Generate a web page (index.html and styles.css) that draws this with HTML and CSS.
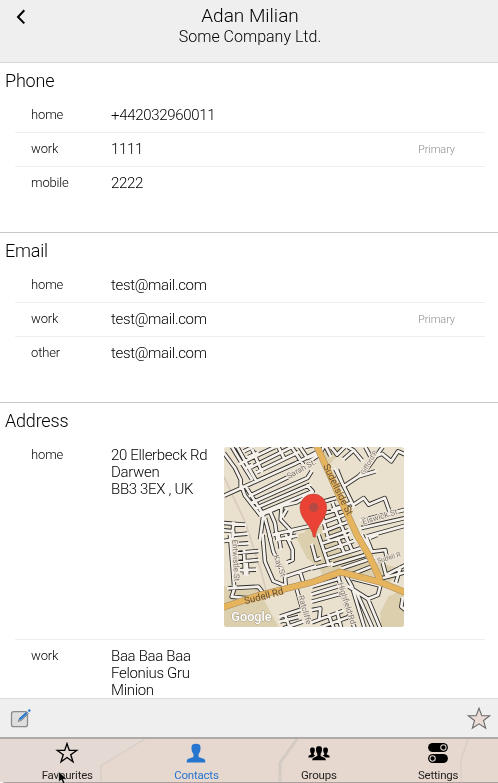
FILE: index.html
```
<!DOCTYPE html>
<html lang="en">
<head>
<meta charset="utf-8">
<title>Adan Milian</title>
<link rel="stylesheet" href="styles.css">
</head>
<body>
<div class="app">
  <header class="header">
    <svg class="back" viewBox="0 0 10 16"><path d="M8.3 1.2 L2 8 L8.3 14.4"/></svg>
    <h1 class="name">Adan Milian</h1>
    <p class="company">Some Company Ltd.</p>
  </header>
  <main class="content">
    <section class="section">
      <h2 class="section-title">Phone</h2>
      <div class="rows">
        <div class="row"><span class="label">home</span><span class="value">+442032960011</span></div>
        <div class="row"><span class="label">work</span><span class="value">1111</span><span class="primary">Primary</span></div>
        <div class="row"><span class="label">mobile</span><span class="value">2222</span></div>
      </div>
    </section>
    <section class="section">
      <h2 class="section-title">Email</h2>
      <div class="rows">
        <div class="row"><span class="label">home</span><span class="value">test@mail.com</span></div>
        <div class="row"><span class="label">work</span><span class="value">test@mail.com</span><span class="primary">Primary</span></div>
        <div class="row"><span class="label">other</span><span class="value">test@mail.com</span></div>
      </div>
    </section>
    <section class="section">
      <h2 class="section-title">Address</h2>
      <div class="rows">
        <div class="row address">
          <span class="label">home</span>
          <span class="value">20 Ellerbeck Rd<br>Darwen<br>BB3 3EX , UK</span>
          <svg class="map" viewBox="12 12 540 540">
            <defs>
              <g id="streets">
                <path d="M12 158L75 130L225 62L290 28M12 30L45 75L62 110L62 132M36 12L62 55L95 108M52 12L95 90L108 112M60 62L165 12M72 25L98 12M85 42L112 30M95 72L215 12M110 88L235 28M98 22L125 85M175 12L192 45M215 12L250 65M240 12L262 45L300 30M78 75L95 66M78 132L130 215L120 290M90 158L225 92M98 178L262 105L275 85M108 195L270 125M118 212L278 145L262 128M65 130L75 158L122 218M125 215L150 205L188 188L230 178L278 150M150 205L165 240L172 290M185 188L182 230L212 262L290 245M200 200L188 220M135 225L152 290M12 240L75 245M12 262L40 265L38 290M40 240L38 276L82 272M255 12L285 5M160 275L215 262L210 290"/>
                <g transform="translate(276 0)"><path d="M70 78L125 190M75 80L95 130L140 100L190 85M140 100L170 70L212 12M95 48L125 22L150 52M108 12L125 22M160 12L175 40M195 38L210 32L238 55L258 25L280 35M42 12L55 38M60 15L75 35L98 12M0 50L22 35L35 12M125 185L155 165L170 185L218 165L235 212M148 232L280 200M148 255L280 225M165 280L280 248M20 180L72 165M60 200L115 180M25 215L90 195M30 240L98 215M35 265L105 238M62 180L105 290M25 200L50 290M45 285L110 262"/></g>
                <g transform="translate(0 276)"><path d="M12 18L45 12M30 0L42 150M38 28L85 25M42 55L115 48M45 82L115 75M60 105L108 104M72 48L75 118M80 78L82 118M25 160L115 155L142 190M45 155L35 185L85 190M128 0L135 80L160 138L190 150M148 0L160 50L195 125L198 165M176 0L182 40M198 0L218 45L218 75L202 82M195 125L285 95M240 110L252 148M228 155L248 225M180 245L240 225M180 260L235 246M190 280L248 260M195 240L210 280M176 14L230 2"/></g>
                <g transform="translate(276 276)"><path d="M0 30L12 75L25 70M20 0L50 90M32 25L110 0M40 48L125 18M48 70L145 40M60 90L160 60M78 10L95 50M100 0L120 45M0 100L60 85M90 100L185 68M120 118L190 90M150 0L175 52M165 12L180 50L220 45L225 75M175 8L195 0M210 75L222 120L280 90M200 132L280 112M252 142L265 98M78 122L92 180L128 280M0 155L78 132M0 178L85 152M0 200L90 175M100 118L120 155L158 280M120 130L205 152L198 180L168 192M110 155L168 192L205 280M135 175L182 280M0 225L25 220L22 250M0 262L92 228M28 276L120 242M50 240L65 280M75 230L88 280M272 190L268 215L280 225"/></g>
              </g>
              <path id="mains" d="M286 0L336 110L376 200L411 276L446 336L481 411M0 496L120 456L276 418L361 387L476 416L560 450"/>
            </defs>
            <path class="land" d="M0 0H560V560H0z"/>
            <path class="park" d="M288 0H385L325 70zM250 250L360 250L375 330L552 380L500 425L380 385L310 405zM225 276L290 260L310 385L260 345zM0 430L110 430L180 560H0zM505 460L552 440V560H485L480 510z"/>
            <path class="track" d="M12 100L32 145L75 235L125 390L145 470"/>
            <use class="casing" href="#streets"/>
            <use class="fill" href="#streets"/>
            <use class="main-casing" href="#mains"/>
            <use class="main-fill" href="#mains"/>
            <g class="names">
              <text transform="translate(206 108) rotate(-29)">Sarah St.</text>
              <text class="small" transform="translate(432 96) rotate(-59)">Gifford P</text>
              <text transform="translate(430 245) rotate(-17)">Elswick St</text>
              <text class="small" transform="translate(474 360) rotate(-16)">Sudell R</text>
              <text transform="translate(36 290) rotate(87)">Entwistle St</text>
              <text transform="translate(160 339) rotate(70)">Kay St</text>
              <text transform="translate(235 460) rotate(74)">Ratcliffe</text>
              <text transform="translate(353 422) rotate(72)">Highfield Rd</text>
            </g>
            <g class="main-names">
              <text transform="translate(309 69) rotate(64)">Sudellside St</text>
              <text transform="translate(76 484) rotate(-15)">Sudell Rd</text>
            </g>
            <path class="pin" d="M280 282C276 246 240 231 240 193A40 40 0 0 1 320 193C320 231 288 246 286 282z"/>
            <circle class="pin-dot" cx="281" cy="193" r="14"/>
            <text class="google" x="34" y="534">Google</text>
          </svg>
        </div>
        <div class="row address"><span class="label">work</span><span class="value">Baa Baa Baa<br>Felonius Gru<br>Minion</span></div>
      </div>
    </section>
  </main>
  <div class="toolbar">
    <svg class="edit" viewBox="0 0 22 20"><rect x="1.5" y="2.7" width="16" height="15" rx="2.2"/><path class="pencil-edge" d="M8 12.4L10 9L17 3L18.5 4.5L11.5 11.5z"/><path class="pencil" d="M9.5 10.6L16.8 3.9M18.4 2.4L20.2 .8"/></svg>
    <svg class="star-light" viewBox="0 0 24 23"><path d="M12 1.2L14.8 8.7H22.7L16.5 13.5L18.7 21.3L12 16.8L5.3 21.3L7.5 13.5L1.3 8.7H9.2z"/></svg>
  </div>
  <nav class="tabs">
    <svg class="backdrop" viewBox="0 0 498 45" preserveAspectRatio="none"><path class="shade" d="M0 0H145L101 28V45H0z"/><path class="faint" d="M145 0L101 28V45M468 0L461 22V45"/><path d="M297 0L280 25V45"/></svg>
    <a class="tab"><svg class="icon" viewBox="0 0 24 24"><path class="outline" d="M12 1.8L14.5 9.2H22.5L16.1 13.8L18.5 21.6L12 16.9L5.5 21.6L7.9 13.8L1.5 9.2H9.5z"/></svg><span>Favourites</span></a>
    <a class="tab active"><svg class="icon" viewBox="0 0 24 24"><path d="M7.2 5.4C7.2 2.8 9 2 12 2S16.8 2.8 16.8 5.4C17.3 9 16.2 11.5 14.8 13V16.3L21 18.5Q22.3 19.4 22.2 22.3H1.8Q1.7 19.4 3 18.5L9.2 16.3V13C7.8 11.5 6.7 9 7.2 5.4z"/></svg><span>Contacts</span></a>
    <a class="tab"><svg class="icon" viewBox="0 0 24 24"><path d="M8.8 7C8.8 5.2 10 4.6 12 4.6S15.2 5.2 15.2 7C15.5 9.6 14.8 11.5 13.8 12.7V15.4L18 17.2Q19.5 18 19.5 19.8H4.5Q4.5 18 6 17.2L10.2 15.4V12.7C9.2 11.5 8.5 9.6 8.8 7zM2.3 8.3C2.3 6.6 3.3 6 4.9 6S7.4 6.7 7.4 8.3C7.6 10.5 7 11.6 6.3 12.5V14L8 14.8L4.6 17H.4Q.3 15 1.5 14.5L3.5 13.7V12.5C2.6 11.6 2.1 10.5 2.3 8.3zM21.7 8.3C21.7 6.6 20.7 6 19.1 6S16.6 6.7 16.6 8.3C16.4 10.5 17 11.6 17.7 12.5V14L16 14.8L19.4 17H23.6Q23.7 15 22.5 14.5L20.5 13.7V12.5C21.4 11.6 21.9 10.5 21.7 8.3z"/></svg><span>Groups</span></a>
    <a class="tab"><svg class="icon" viewBox="0 0 24 24"><rect x="1.2" y="1" width="21.6" height="10" rx="5"/><rect x="1.2" y="13" width="21.6" height="10" rx="5"/><circle class="knob" cx="17.9" cy="6" r="2.9"/><circle class="knob" cx="6.1" cy="18" r="2.9"/></svg><span>Settings</span></a>
  </nav>
  <svg class="cursor" viewBox="0 0 10 14"><path d="M.7 .5V11L3.3 8.8L5.2 13.3L7.1 12.5L5.3 8.2H9z"/></svg>
</div>
</body>
</html>
```
FILE: styles.css
```
* { box-sizing: border-box; }

body {
  margin: 0;
  background: #fff;
  color: #000;
  font-family: Roboto, sans-serif;
  font-weight: 300;
}

.app {
  position: relative;
  display: flex;
  flex-direction: column;
  height: 783px;
  overflow: hidden;
  will-change: transform;
}

.header {
  position: relative;
  flex: none;
  height: 63px;
  padding-top: 4px;
  background: #efefef;
  border-bottom: 1px solid #d9d9d9;
  text-align: center;
}

.back {
  position: absolute;
  left: 16px;
  top: 9px;
  width: 10px;
  height: 16px;
  fill: none;
  stroke: #000;
  stroke-width: 2;
}

.name {
  margin: 0;
  padding-left: 2px;
  font-size: 19px;
  font-weight: 300;
  line-height: 23px;
}

.company {
  margin: 0;
  padding-left: 2px;
  font-size: 16px;
  line-height: 19px;
}

.content {
  flex: 1;
  min-height: 0;
  overflow: hidden;
}

.section {
  height: 170px;
  padding-top: 6px;
  border-bottom: 1px solid #c8c8c8;
}

.section:last-child {
  height: auto;
  border-bottom: 0;
}

.section-title {
  margin: 0 0 6px 5px;
  font-size: 18px;
  font-weight: 300;
  line-height: 23px;
  letter-spacing: -.2px;
}

.rows { margin: 0 13px 0 15px; }

.row {
  display: flex;
  align-items: flex-start;
  height: 34px;
  padding: 8px 30px 0 16px;
  border-bottom: 1px solid #efefef;
}

.row:first-child { height: 35px; padding-top: 9px; }
.row:last-child { border-bottom: 0; }

.label {
  flex: none;
  width: 80px;
  font-size: 13px;
  line-height: 15px;
  letter-spacing: -.15px;
}

.value {
  font-size: 15px;
  line-height: 17px;
  letter-spacing: -.32px;
}

.primary {
  margin-left: auto;
  color: #8f8f8f;
  font-size: 11px;
  line-height: 18px;
  letter-spacing: -.1px;
}

.row.address { height: auto; }
.row.address:first-child { height: 202px; }
.row.address .value { width: 113px; white-space: nowrap; }

.map {
  flex: none;
  width: 180px;
  height: 180px;
  border-radius: 3px;
}

.land { fill: #e9e1cd; }
.park { fill: #dccfad; }
.track { fill: none; stroke: #d8cbbd; stroke-width: 5; }
.casing, .fill, .main-casing, .main-fill { fill: none; stroke-linejoin: round; }
.casing { stroke: #2c2c2c; stroke-width: 13.5; }
.fill { stroke: #f5f1ea; stroke-width: 8.2; stroke-linecap: square; }
.main-casing { stroke: #a58a60; stroke-width: 20; }
.main-fill { stroke: #e5b45d; stroke-width: 17; }

.names text {
  fill: #81776c;
  stroke: #eee7dc;
  stroke-width: 6px;
  paint-order: stroke;
  font-size: 24px;
  font-weight: 400;
}

.names .small { font-size: 20px; }

.main-names text {
  fill: #64513a;
  stroke: #e5b45d;
  stroke-width: 2px;
  paint-order: stroke;
  font-size: 29px;
  font-weight: 400;
}

.pin { fill: #ea4335; stroke: #b9473a; stroke-width: 2; }
.pin-dot { fill: #b64a43; }

.google {
  fill: #fff;
  stroke: #aaa08c;
  stroke-width: 3px;
  paint-order: stroke;
  font: 500 38px Roboto, sans-serif;
}

.toolbar {
  flex: none;
  display: flex;
  align-items: flex-start;
  justify-content: space-between;
  height: 39px;
  padding: 8px 7px 0 10px;
  background: #efefef;
  border-top: 1px solid #dcdcdc;
}

.edit { width: 22px; height: 20px; margin-top: 2px; }
.edit rect { fill: #dedede; stroke: #8a8a8a; stroke-width: 1.3; }
.pencil-edge { fill: #c9c9c9; stroke: #888; stroke-width: 1; }
.pencil { fill: none; stroke: #2b7cd3; stroke-width: 2.2; }

.star-light { width: 24px; height: 23px; }
.star-light path { fill: #eadcd5; stroke: #6d6a69; stroke-width: 1.1; }

.tabs {
  position: relative;
  flex: none;
  display: flex;
  justify-content: space-around;
  height: 46px;
  padding: 3px 0 0 1px;
  background: #e6d8cf;
  border-top: 2px solid #adaaa8;
  border-bottom: 1px solid #aaa19c;
  border-radius: 0 0 0 5px;
}

.backdrop {
  position: absolute;
  inset: 0;
  width: 100%;
  height: 100%;
  fill: none;
  stroke: #d4cbc4;
  stroke-width: 3;
}

.backdrop .shade { fill: #e4dad3; stroke: none; }
.backdrop .faint { stroke: #dacfc8; stroke-width: 1.5; }

.tab {
  position: relative;
  display: flex;
  flex-direction: column;
  align-items: center;
  color: #000;
  font-size: 11.5px;
  font-weight: 400;
  line-height: 14px;
  letter-spacing: -.2px;
}

.tab:nth-of-type(n+3) { left: 1px; }
.tab span { color: #262321; }
.tab.active, .tab.active span { color: #2675cf; }

.icon {
  width: 24px;
  height: 24px;
  margin-bottom: 4px;
  fill: currentColor;
}

.outline { fill: none; stroke: #000; stroke-width: 1.5; }
.knob { stroke: #e6d8cf; stroke-width: 1.1; }

.cursor {
  position: absolute;
  left: 58px;
  top: 771px;
  width: 10px;
  height: 14px;
  fill: #000;
  stroke: #fff;
  stroke-width: .5;
}
```
